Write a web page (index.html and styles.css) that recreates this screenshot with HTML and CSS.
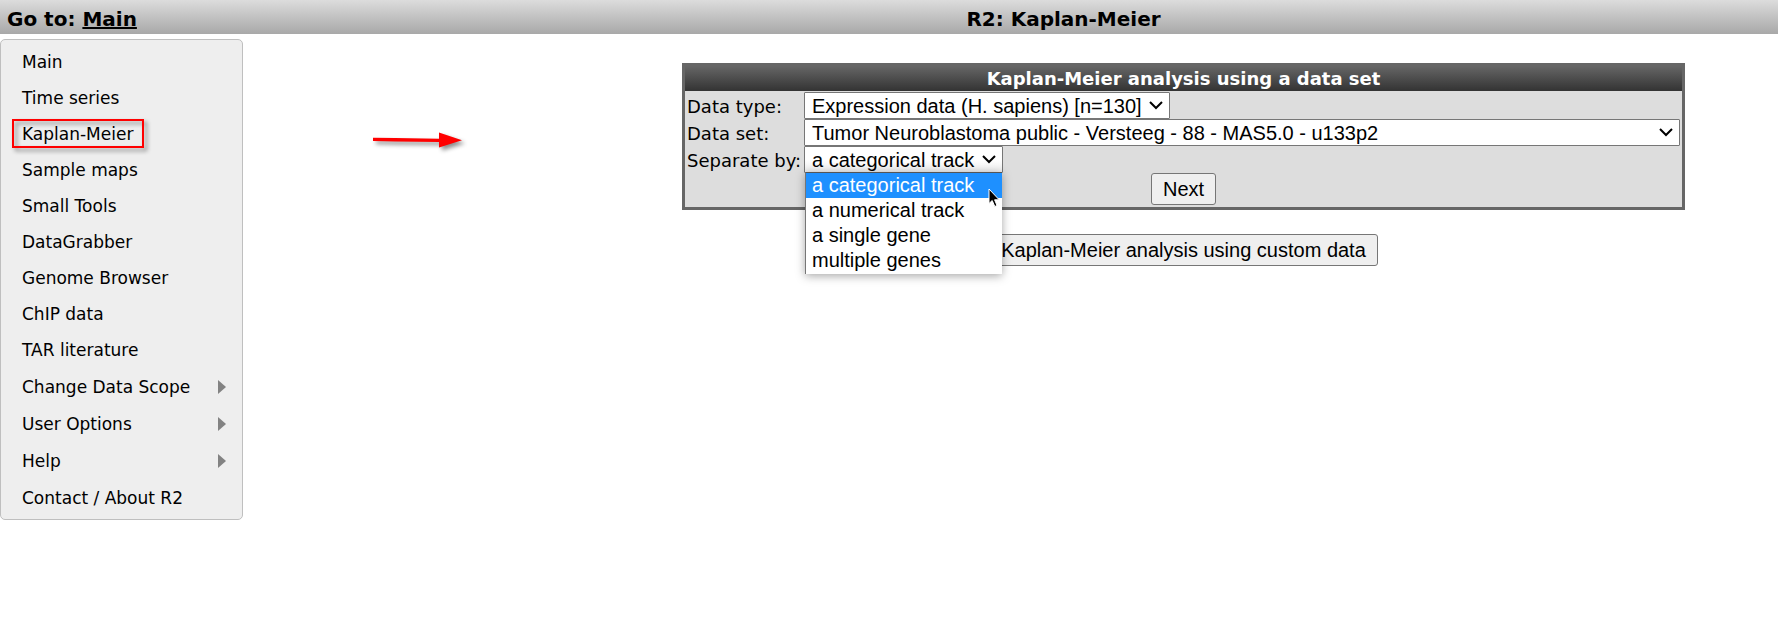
FILE: index.html
```html
<!DOCTYPE html>
<html lang="en">
<head>
<meta charset="utf-8">
<title>R2: Kaplan-Meier</title>
<link rel="stylesheet" href="styles.css">
</head>
<body>
<header class="topbar">
  <div class="goto">Go to: <a href="#main">Main</a></div>
  <h1 class="page-title">R2: Kaplan-Meier</h1>
</header>
<div class="layout">
  <nav class="menu">
    <a class="item" href="#main">Main</a>
    <a class="item" href="#time">Time series</a>
    <a class="item" href="#km"><span class="marked">Kaplan-Meier</span></a>
    <a class="item" href="#maps">Sample maps</a>
    <a class="item" href="#tools">Small Tools</a>
    <a class="item" href="#grabber">DataGrabber</a>
    <a class="item" href="#genome">Genome Browser</a>
    <a class="item" href="#chip">ChIP data</a>
    <a class="item" href="#tar">TAR literature</a>
    <a class="item tall" href="#scope">Change Data Scope<svg class="caret" viewBox="0 0 8 14"><path d="M0 0L8 7L0 14Z"/></svg></a>
    <a class="item tall" href="#options">User Options<svg class="caret" viewBox="0 0 8 14"><path d="M0 0L8 7L0 14Z"/></svg></a>
    <a class="item tall" href="#help">Help<svg class="caret" viewBox="0 0 8 14"><path d="M0 0L8 7L0 14Z"/></svg></a>
    <a class="item tall" href="#contact">Contact / About R2</a>
  </nav>
  <div class="pointer">
    <svg class="arrow" viewBox="0 0 90 16"><path d="M0 5.8L22 6L66 6.8V0.5L89 8.2L66 15.5V10L22 9.6L0 9Z"/></svg>
  </div>
  <main class="content">
    <form class="panel">
      <h2 class="panel-title">Kaplan-Meier analysis using a data set</h2>
      <div class="fields">
        <label for="type">Data type:</label>
        <div class="picker type">
          <select id="type"><option>Expression data (H. sapiens) [n=130]</option></select>
          <svg class="chevron" viewBox="0 0 14 9"><path d="M1 1L7 7L13 1"/></svg>
        </div>
        <label for="set">Data set:</label>
        <div class="picker">
          <select id="set"><option>Tumor Neuroblastoma public - Versteeg - 88 - MAS5.0 - u133p2</option></select>
          <svg class="chevron" viewBox="0 0 14 9"><path d="M1 1L7 7L13 1"/></svg>
        </div>
        <label for="separate">Separate by:</label>
        <div class="picker separate">
          <select id="separate"><option>a categorical track</option><option>a numerical track</option><option>a single gene</option><option>multiple genes</option></select>
          <svg class="chevron" viewBox="0 0 14 9"><path d="M1 1L7 7L13 1"/></svg>
          <ul class="popup">
            <li class="active">a categorical track</li>
            <li>a numerical track</li>
            <li>a single gene</li>
            <li>multiple genes</li>
          </ul>
          <svg class="cursor" viewBox="0 0 12 20"><path d="M1 1V15.5L4.2 12.5L6.8 18.5L9 17.5L6.6 11.8H11.2Z"/></svg>
        </div>
      </div>
      <div class="submit"><button type="button">Next</button></div>
    </form>
    <button type="button" class="custom">Kaplan-Meier analysis using custom data</button>
  </main>
</div>
</body>
</html>
```
FILE: styles.css
```css
* { box-sizing: border-box; }

body {
  margin: 0;
  background: #fff;
  color: #000;
  font-family: Verdana, "DejaVu Sans", sans-serif;
}

.topbar {
  display: grid;
  grid-template-columns: 349px 1fr;
  align-items: center;
  height: 34px;
  padding-top: 3px;
  background: linear-gradient(#dcdcdc, #a8a8a8);
  font-size: 20px;
  font-weight: bold;
}

.goto { padding-left: 7px; }
.goto a { color: #000; }

.page-title {
  margin: 0;
  font-size: 20px;
  text-align: center;
}

.layout {
  display: grid;
  grid-template-columns: 243px 346px 1fr;
  align-items: start;
}

.menu {
  margin-top: 5px;
  padding: 4px 0 3px;
  border: 1px solid #bfbfbf;
  border-radius: 5px;
  background: #eee;
}

.item {
  display: flex;
  align-items: center;
  justify-content: space-between;
  height: 36px;
  padding: 0 16px 0 21px;
  color: #000;
  font-size: 17px;
  line-height: 20px;
  text-decoration: none;
}

.tall { height: 37px; }

.caret {
  width: 8px;
  height: 14px;
  fill: #828282;
}

.marked { position: relative; }

.marked::after {
  content: "";
  position: absolute;
  inset: -5px -11px -4px -10px;
  border: 2px solid #f00;
  filter: drop-shadow(3px 3px 2px rgba(0, 0, 0, 0.45));
}

.pointer { padding: 98px 0 0 130px; }

.arrow {
  display: block;
  width: 90px;
  height: 16px;
  overflow: visible;
  fill: #f00;
  filter: drop-shadow(3px 3px 2px rgba(0, 0, 0, 0.45));
}

.content {
  display: flex;
  flex-direction: column;
  align-items: center;
  gap: 24px;
  padding: 29px 93px 0;
}

.panel {
  width: 100%;
  border: 3px solid #666;
  background: #ddd;
}

.panel-title {
  margin: 0;
  background: linear-gradient(#666, #333);
  color: #fff;
  font-size: 18px;
  line-height: 25px;
  text-align: center;
}

.fields {
  display: grid;
  grid-template-columns: 117px 1fr;
  padding: 1px 2px 0;
  font-size: 18px;
  line-height: 27px;
  white-space: nowrap;
}

.fields label { padding-top: 1px; height: 27px; }

.picker {
  position: relative;
  height: 27px;
}

.type { width: 366px; }
.separate { width: 199px; }

.picker select {
  display: block;
  width: 100%;
  height: 27px;
  padding: 2px 0 0 7px;
  border: 1px solid #767676;
  border-radius: 1px;
  appearance: none;
  background: #fff;
  color: #000;
  font: 20px/23px Arial, "Liberation Sans", sans-serif;
}

.picker.separate select {
  background: linear-gradient(#fff 50%, #ececec);
}

.chevron {
  position: absolute;
  top: 9px;
  right: 7px;
  width: 14px;
  height: 9px;
  fill: none;
  stroke: #000;
  stroke-width: 2;
  pointer-events: none;
}

.popup {
  position: absolute;
  top: 26px;
  left: 1px;
  right: 1px;
  z-index: 1;
  margin: 0;
  padding: 0 0 1px;
  border-top: 1px solid #555;
  border-left: 1px solid #767676;
  background: #fff;
  box-shadow: 0 2px 9px rgba(0, 0, 0, 0.35);
  font: 20px/25px Arial, "Liberation Sans", sans-serif;
  list-style: none;
}

.popup li { padding-left: 6px; }
.popup .active { background: #1e90ff; color: #fff; }

.cursor {
  position: absolute;
  top: 42px;
  left: 184px;
  z-index: 2;
  width: 12px;
  height: 20px;
  stroke: #fff;
  stroke-width: 1;
}

.submit {
  display: flex;
  justify-content: center;
  padding-bottom: 2px;
}

button {
  height: 32px;
  padding: 0 11px 1px;
  border: 1px solid #767676;
  border-radius: 3px;
  background: #efefef;
  color: #000;
  font: 20px/28px Arial, "Liberation Sans", sans-serif;
}
```
